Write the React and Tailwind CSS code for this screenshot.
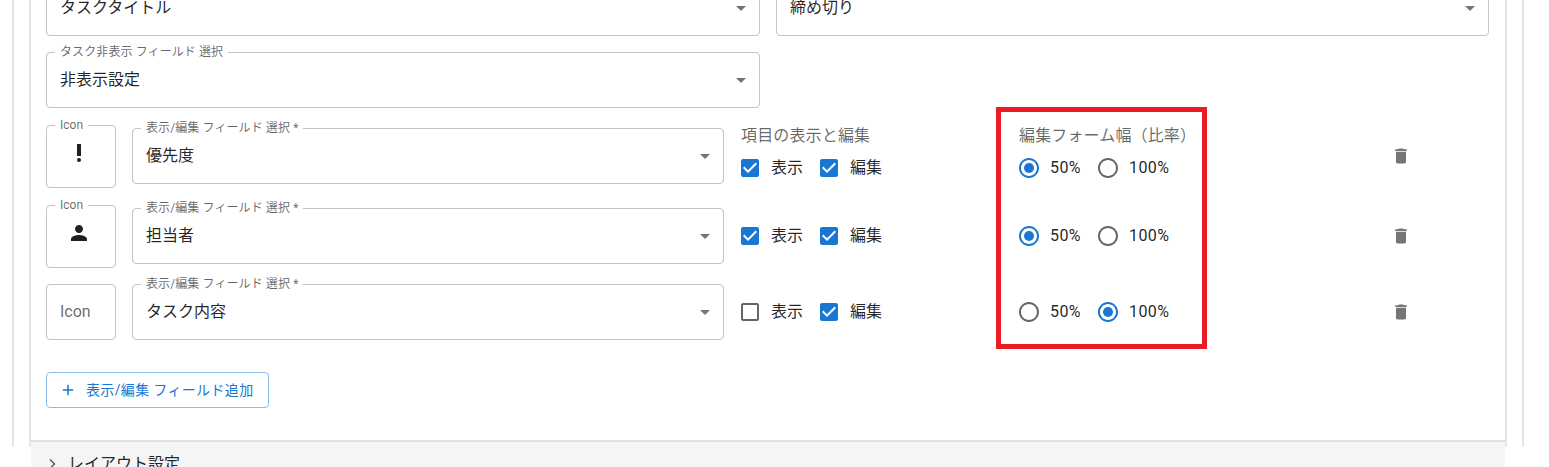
const FONT = "font-['Roboto','Noto_Sans_CJK_JP',sans-serif]";

function Icon({ d, className, children }) {
  return (
    <svg viewBox="0 0 24 24" className={className} fill="currentColor" aria-hidden="true">
      {d ? <path d={d} /> : children}
    </svg>
  );
}

const ARROW = "M7 10l5 5 5-5z";
const TRASH = "M6 19c0 1.1.9 2 2 2h8c1.1 0 2-.9 2-2V7H6v12zM19 4h-3.5l-1-1h-5l-1 1H5v2h14V4z";
const PERSON = "M12 12c2.21 0 4-1.79 4-4s-1.79-4-4-4-4 1.79-4 4 1.79 4 4 4zm0 2c-2.67 0-8 1.34-8 4v2h16v-2c0-2.66-5.33-4-8-4z";
const PLUS = "M19 13h-6v6h-2v-6H5v-2h6V5h2v6h6v2z";
const CHECKED = "M19 3H5c-1.11 0-2 .9-2 2v14c0 1.1.89 2 2 2h14c1.11 0 2-.9 2-2V5c0-1.1-.89-2-2-2zm-9 14l-5-5 1.41-1.41L10 14.17l7.59-7.59L19 8l-9 9z";
const BLANK = "M19 5v14H5V5h14m0-2H5c-1.1 0-2 .9-2 2v14c0 1.1.9 2 2 2h14c1.1 0 2-.9 2-2V5c0-1.1-.9-2-2-2z";
const RING = "M12 2C6.48 2 2 6.48 2 12s4.48 10 10 10 10-4.48 10-10S17.52 2 12 2zm0 18c-4.42 0-8-3.58-8-8s3.58-8 8-8 8 3.58 8 8-3.58 8-8 8z";

function SelectField({ label, value, className }) {
  return (
    <div className={`relative h-[56px] rounded border border-[#c4c4c4] bg-white ${className}`}>
      {label && (
        <span className="absolute left-[8px] top-[-8px] whitespace-nowrap bg-white px-[5px] text-[12px] leading-[14px] tracking-[0.1px] text-[#00000099]">
          {label}
        </span>
      )}
      <div className="flex h-full items-center justify-between pl-[13px] pr-[6px]">
        <span className="text-[16px] text-[#000000de]">{value}</span>
        <Icon d={ARROW} className="h-6 w-6 text-[#757575]" />
      </div>
    </div>
  );
}

function Check({ on, label }) {
  return (
    <label className="flex items-center">
      <Icon d={on ? CHECKED : BLANK} className={`h-6 w-6 ${on ? "text-[#1976d2]" : "text-[#666666]"}`} />
      <span className="ml-[9px] text-[16px] leading-6 text-[#000000de]">{label}</span>
    </label>
  );
}

function Radio({ on, label, className }) {
  return (
    <label className={`flex items-center ${className}`}>
      <Icon className={`h-6 w-6 shrink-0 ${on ? "text-[#1976d2]" : "text-[#666666]"}`}>
        <path d={RING} />
        {on && <circle cx="12" cy="12" r="5" />}
      </Icon>
      <span className="ml-[9px] text-[16px] leading-6 tracking-[0.4px] text-[#000000de]">{label}</span>
    </label>
  );
}

function Row({ rowClass, iconClass, fieldClass, ctrlClass, icon, value, view, half, heading }) {
  return (
    <div className={`flex items-start ${rowClass}`}>
      <div className={`relative w-[70px] shrink-0 rounded border border-[#c4c4c4] ${iconClass}`}>
        {icon && (
          <span className="absolute left-[8px] top-[-8px] bg-white px-[5px] text-[12px] leading-[14px] text-[#00000099]">Icon</span>
        )}
        {icon ? (
          <div className="flex h-full items-center justify-center">{icon}</div>
        ) : (
          <div className="flex h-full items-center pl-[13px] text-[16px] text-[#00000099]">Icon</div>
        )}
      </div>
      <SelectField
        label="表示/編集 フィールド 選択 *"
        value={value}
        className={`ml-[16px] w-[592px] shrink-0 ${fieldClass}`}
      />
      <div className={`ml-[14px] w-[653px] shrink-0 ${ctrlClass}`}>
        {heading && (
          <div className="mb-[10px] flex h-[20px] text-[16px] leading-[20px] tracking-[0.15px] text-[#00000099]">
            <span className="ml-[3px] w-[278px] shrink-0">項目の表示と編集</span>
            <span className="whitespace-nowrap">編集フォーム幅（比率）</span>
          </div>
        )}
        <div className="flex items-center">
          <div className="flex w-[278px] shrink-0 items-center">
            <Check on={view} label="表示" />
            <div className="ml-[14px]"><Check on label="編集" /></div>
          </div>
          <Radio on={half} label="50%" className="ml-[1px] w-[79px] shrink-0" />
          <Radio on={!half} label="100%" className="shrink-0" />
        </div>
      </div>
      <div className={`flex h-[56px] w-5 items-center ${fieldClass}`}>
        <Icon d={TRASH} className="h-5 w-5 text-[#757575]" />
      </div>
    </div>
  );
}

export default function App() {
  return (
    <div className={`relative h-[467px] overflow-hidden bg-white ${FONT}`}>
      <div className="ml-[12px] h-full w-[1512px] border-x-2 border-[#e4e4e4] px-[15px]">
        <div className="h-full border-x-2 border-[#e4e4e4]">
          <div className="mt-[-20px] px-[15px]">
            <div className="flex gap-[16px]">
              <SelectField value="タスクタイトル" className="w-[714px]" />
              <SelectField value="締め切り" className="w-[713px]" />
            </div>
            <SelectField label="タスク非表示 フィールド 選択" value="非表示設定" className="mt-[16px] w-[714px]" />
            <Row
              rowClass="mt-[17px]"
              iconClass="h-[63px]"
              fieldClass="mt-[3px]"
              ctrlClass="mt-[1px]"
              icon={
                <Icon className="mb-[7px] mr-[5px] h-6 w-6 text-[#000000de]">
                  <circle cx="12" cy="19" r="2" />
                  <path d="M10 3h4v12h-4z" />
                </Icon>
              }
              value="優先度"
              view
              half
              heading
            />
            <Row
              rowClass="mt-[17px]"
              iconClass="h-[63px]"
              fieldClass="mt-[3px]"
              ctrlClass="mt-[19px]"
              icon={<Icon d={PERSON} className="mb-[7px] mr-[5px] h-6 w-6 text-[#000000de]" />}
              value="担当者"
              view
              half
            />
            <Row
              rowClass="mt-[16px]"
              iconClass="h-[56px]"
              fieldClass=""
              ctrlClass="mt-[16px]"
              value="タスク内容"
              view={false}
              half={false}
            />
            <button className="mt-[32px] flex h-[36px] w-[223px] items-center rounded border border-[#8dbbe9] pl-[12px] text-[14px] tracking-[0.35px] text-[#1976d2]">
              <Icon d={PLUS} className="h-[18px] w-[18px]" />
              <span className="ml-[9px] whitespace-nowrap">表示/編集 フィールド追加</span>
            </button>
          </div>
          <div className="mt-[32px] flex h-[40px] items-start border-t-2 border-[#e0e0e0] bg-[#f5f5f5] pl-[16px] pt-[12px]">
            <svg viewBox="0 0 12 12" className="mt-[4px] h-3 w-3 text-[#555555]" fill="none" stroke="currentColor" strokeWidth="1.4" aria-hidden="true">
              <path d="M3 1.5 7.5 6 3 10.5" />
            </svg>
            <span className="ml-[9px] text-[16px] leading-[20px] text-[#000000de]">レイアウト設定</span>
          </div>
        </div>
      </div>
      <div className="pointer-events-none absolute left-[996px] top-[107px] h-[242px] w-[211px] border-[5px] border-[#ed1c24]" />
    </div>
  );
}
